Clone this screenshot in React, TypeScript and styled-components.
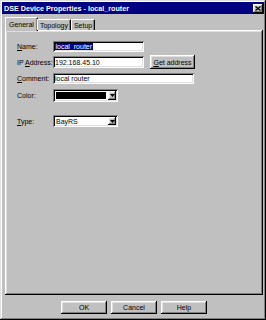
import styled, { createGlobalStyle } from 'styled-components';

const GlobalStyle = createGlobalStyle`
  html, body {
    margin: 0;
    padding: 0;
    background: #c0c0c0;
  }
  body {
    font-family: "Liberation Sans", Arial, sans-serif;
    font-size: 7px;
    color: #000;
  }
`;

const raised = `
  box-shadow: inset -1px -1px #000, inset 1px 1px #fff, inset -2px -2px #808080, inset 2px 2px #dfdfdf;
`;

const sunken = `
  box-shadow: inset 1px 1px #808080, inset -1px -1px #fff, inset 2px 2px #000, inset -2px -2px #dfdfdf;
`;

const Window = styled.div`
  width: 266px;
  height: 320px;
  box-sizing: border-box;
  padding: 2px;
  display: flex;
  flex-direction: column;
  background: #c0c0c0;
  box-shadow: inset -1px -1px #000, inset 1px 1px #dfdfdf, inset -2px -2px #808080, inset 2px 2px #fff;
`;

const TitleBar = styled.div`
  height: 12px;
  display: flex;
  align-items: center;
  justify-content: space-between;
  padding: 0 1px 0 2px;
  background: #000080;
  color: #fff;
  font-weight: bold;
  font-size: 7.2px;
  white-space: nowrap;
`;

const CloseBox = styled.div`
  width: 10px;
  height: 9px;
  display: flex;
  align-items: center;
  justify-content: center;
  background: #c0c0c0;
  ${raised}
`;

const Body = styled.div`
  flex: 1;
  display: flex;
  flex-direction: column;
  padding: 3px 1px 0 3px;
`;

const TabStrip = styled.div`
  height: 13px;
  display: flex;
  align-items: flex-end;
  padding-left: 2px;
  position: relative;
  z-index: 1;
`;

const Tab = styled.div<{ $active?: boolean }>`
  height: ${p => (p.$active ? 14 : 11)}px;
  margin: ${p => (p.$active ? '0 -1px -1px -2px' : '0')};
  padding: 0 ${p => (p.$active ? 3 : 2)}px;
  display: flex;
  align-items: center;
  box-sizing: border-box;
  background: #c0c0c0;
  border-top: 1px solid #fff;
  border-left: 1px solid #fff;
  border-right: 1px solid #000;
  border-top-left-radius: 1px;
  border-top-right-radius: 1px;
  box-shadow: inset -1px 0 #808080;
`;

const Panel = styled.div`
  flex: 1;
  display: flex;
  flex-direction: column;
  padding: 8px 12px;
  ${raised}
`;

const Row = styled.div<{ $h: number; $gap?: number }>`
  height: ${p => p.$h}px;
  margin-top: ${p => p.$gap ?? 0}px;
  display: flex;
  align-items: center;
`;

const Label = styled.div`
  width: 36px;
  white-space: nowrap;
`;

const TextBox = styled.div<{ $w: number; $h: number }>`
  width: ${p => p.$w}px;
  height: ${p => p.$h}px;
  box-sizing: border-box;
  padding: 0 2px;
  display: flex;
  align-items: center;
  background: #fff;
  white-space: nowrap;
  ${sunken}
`;

const Selected = styled.span`
  background: #000080;
  color: #fff;
  padding: 0 0.5px;
`;

const Button = styled.div<{ $w: number; $h: number }>`
  width: ${p => p.$w}px;
  height: ${p => p.$h}px;
  display: flex;
  align-items: center;
  justify-content: center;
  box-sizing: border-box;
  background: #c0c0c0;
  white-space: nowrap;
  ${raised}
`;

const SideButton = styled(Button)`
  margin-left: 6px;
`;

const Select = styled.div<{ $h: number }>`
  width: 65px;
  height: ${p => p.$h}px;
  box-sizing: border-box;
  padding: 2px;
  display: flex;
  background: #fff;
  ${sunken}
`;

const SelectValue = styled.div<{ $swatch?: string }>`
  flex: 1;
  display: flex;
  align-items: center;
  padding-left: 1px;
  margin: ${p => (p.$swatch ? '1px 2px 1px 1px' : '0')};
  background: ${p => p.$swatch ?? 'transparent'};
`;

const Arrow = styled.div`
  width: 8px;
  display: flex;
  align-items: center;
  justify-content: center;
  background: #c0c0c0;
  ${raised}
`;

const ButtonRow = styled.div`
  height: 23px;
  display: flex;
  justify-content: center;
  align-items: flex-start;
  gap: 4px;
  padding-top: 6px;
  box-sizing: border-box;
`;

const Key = styled.span`
  text-decoration: underline;
`;

const DownArrow = () => (
  <svg width="5" height="3" viewBox="0 0 5 3">
    <path d="M0 0h5L2.5 3z" fill="#000" />
  </svg>
);

const App = () => {
  return (
    <>
      <GlobalStyle />
      <Window>
        <TitleBar>
          <span>DSE Device Properties - local_router</span>
          <CloseBox>
            <svg width="6" height="5" viewBox="0 0 6 5">
              <path d="M0.5 0.5l5 4M5.5 0.5l-5 4" stroke="#000" strokeWidth="1.2" />
            </svg>
          </CloseBox>
        </TitleBar>
        <Body>
          <TabStrip>
            <Tab $active>General</Tab>
            <Tab>Topology</Tab>
            <Tab>Setup</Tab>
          </TabStrip>
          <Panel>
            <Row $h={16}>
              <Label><Key>N</Key>ame:</Label>
              <TextBox $w={91} $h={11}>
                <Selected>local_router</Selected>
              </TextBox>
            </Row>
            <Row $h={16}>
              <Label>IP <Key>A</Key>ddress:</Label>
              <TextBox $w={91} $h={12}>192.168.45.10</TextBox>
              <SideButton $w={45} $h={14}><Key>G</Key>et address</SideButton>
            </Row>
            <Row $h={16}>
              <Label><Key>C</Key>omment:</Label>
              <TextBox $w={141} $h={11}>local router</TextBox>
            </Row>
            <Row $h={18}>
              <Label>Color:</Label>
              <Select $h={13}>
                <SelectValue $swatch="#000" />
                <Arrow><DownArrow /></Arrow>
              </Select>
            </Row>
            <Row $h={16} $gap={9}>
              <Label><Key>T</Key>ype:</Label>
              <Select $h={12}>
                <SelectValue>BayRS</SelectValue>
                <Arrow><DownArrow /></Arrow>
              </Select>
            </Row>
          </Panel>
          <ButtonRow>
            <Button $w={46} $h={13}>OK</Button>
            <Button $w={46} $h={13}>Cancel</Button>
            <Button $w={46} $h={13}>Help</Button>
          </ButtonRow>
        </Body>
      </Window>
    </>
  );
};

export default App;
